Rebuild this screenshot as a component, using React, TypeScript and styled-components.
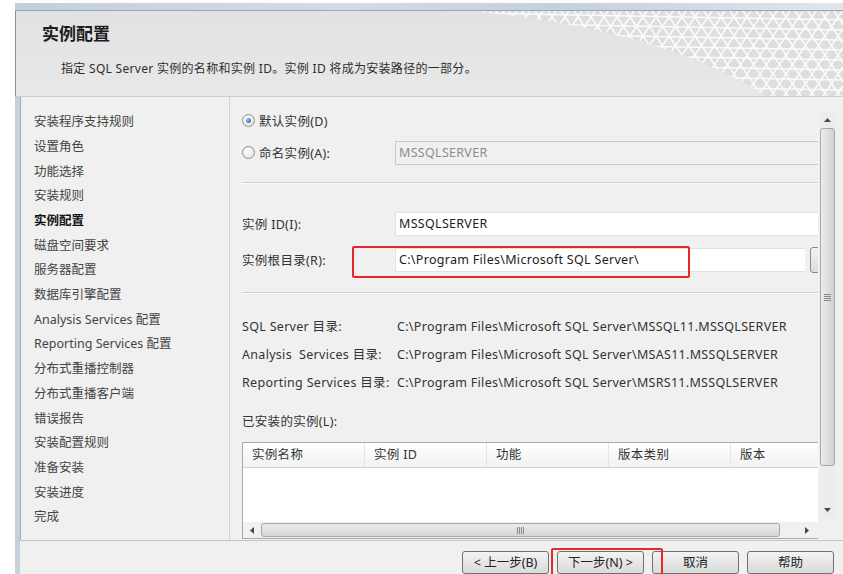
import React from "react";
import styled, { createGlobalStyle } from "styled-components";

const GlobalStyle = createGlobalStyle`
  html, body {
    margin: 0;
    background: #ffffff;
  }
  body {
    font-family: "Noto Sans", "Noto Sans CJK SC", sans-serif;
    font-size: 12.5px;
    letter-spacing: 0.3px;
    color: #333;
  }
`;

const navItems = [
  "安装程序支持规则",
  "设置角色",
  "功能选择",
  "安装规则",
  "实例配置",
  "磁盘空间要求",
  "服务器配置",
  "数据库引擎配置",
  "Analysis Services 配置",
  "Reporting Services 配置",
  "分布式重播控制器",
  "分布式重播客户端",
  "错误报告",
  "安装配置规则",
  "准备安装",
  "安装进度",
  "完成",
];

const dirs = [
  ["SQL Server 目录:", "C:\\Program Files\\Microsoft SQL Server\\MSSQL11.MSSQLSERVER"],
  ["Analysis  Services 目录:", "C:\\Program Files\\Microsoft SQL Server\\MSAS11.MSSQLSERVER"],
  ["Reporting Services 目录:", "C:\\Program Files\\Microsoft SQL Server\\MSRS11.MSSQLSERVER"],
];

const columns = ["实例名称", "实例 ID", "功能", "版本类别", "版本"];

// white lattice fanning out in the top-right corner of the banner
const meshLines: { x1: number; y1: number; x2: number; y2: number }[] = [];
for (let i = -10; i < 34; i++) {
  const x = i * 13;
  meshLines.push({ x1: x, y1: 0, x2: x + 60, y2: 88 });
  meshLines.push({ x1: x + 60, y1: 0, x2: x, y2: 88 });
}
for (let j = 0; j < 9; j++) {
  meshLines.push({ x1: 0, y1: j * 10 + 2, x2: 373, y2: j * 10 + 9 });
}

const MESH = "M0 0 Q 200 20 300 88 L 373 88 L 373 0 Z";

const HeaderArt = () => (
  <ArtBox>
    <svg width="373" height="88" viewBox="0 0 373 88">
      <defs>
        <clipPath id="bannerMeshClip">
          <path d={MESH} />
        </clipPath>
      </defs>
      <path d={MESH} fill="#dedede" />
      <g clipPath="url(#bannerMeshClip)">
        {meshLines.map((l, i) => (
          <line key={i} x1={l.x1} y1={l.y1} x2={l.x2} y2={l.y2} stroke="#fbfbfb" strokeWidth="1.6" />
        ))}
      </g>
    </svg>
  </ArtBox>
);

const Arrow = ({ dir }: { dir: "up" | "down" | "left" | "right" }) => {
  const pts = {
    up: "0,4 3.5,0 7,4",
    down: "0,0 3.5,4 7,0",
    left: "4,0 0,3.5 4,7",
    right: "0,0 4,3.5 0,7",
  }[dir];
  const vertical = dir === "up" || dir === "down";
  return (
    <svg width={vertical ? 7 : 4} height={vertical ? 4 : 7}>
      <polygon points={pts} fill="#4a4a4a" />
    </svg>
  );
};

export default function App() {
  return (
    <>
      <GlobalStyle />
      <Window>
        <TopFrame />
        <Header>
          <HeaderArt />
          <Title>实例配置</Title>
          <Subtitle>指定 SQL Server 实例的名称和实例 ID。实例 ID 将成为安装路径的一部分。</Subtitle>
        </Header>
        <Body>
          <Nav>
            {navItems.map((item) => (
              <NavItem key={item} $active={item === "实例配置"}>
                {item}
              </NavItem>
            ))}
          </Nav>
          <Content>
            <Column>
              <RadioRow>
                <Radio $checked />
                <span>默认实例(D)</span>
              </RadioRow>
              <FieldRow $top={12}>
                <RadioLabel>
                  <Radio />
                  <span>命名实例(A):</span>
                </RadioLabel>
                <TextBox $disabled>MSSQLSERVER</TextBox>
              </FieldRow>
              <Separator $top={17} />
              <FieldRow $top={27}>
                <Label>实例 ID(I):</Label>
                <TextBox>MSSQLSERVER</TextBox>
              </FieldRow>
              <FieldRow $top={11}>
                <Label>实例根目录(R):</Label>
                <TextBox>C:\Program Files\Microsoft SQL Server\</TextBox>
                <BrowseButton />
              </FieldRow>
              <Separator $top={20} />
              <DirList>
                {dirs.map(([label, value]) => (
                  <DirRow key={label}>
                    <DirLabel>{label}</DirLabel>
                    <span>{value}</span>
                  </DirRow>
                ))}
              </DirList>
              <InstalledLabel>已安装的实例(L):</InstalledLabel>
              <Table>
                <TableHead>
                  {columns.map((c) => (
                    <HeadCell key={c}>{c}</HeadCell>
                  ))}
                </TableHead>
                <TableBody />
                <HScroll>
                  <ScrollButton $w={18}>
                    <Arrow dir="left" />
                  </ScrollButton>
                  <HThumb>
                    <Grip $vertical={false} />
                  </HThumb>
                  <ScrollButton $w={22}>
                    <Arrow dir="right" />
                  </ScrollButton>
                </HScroll>
              </Table>
            </Column>
            <VScroll>
              <ScrollButton $h={16}>
                <Arrow dir="up" />
              </ScrollButton>
              <VThumb>
                <Grip $vertical />
              </VThumb>
              <VTrack />
              <ScrollButton $h={16}>
                <Arrow dir="down" />
              </ScrollButton>
            </VScroll>
          </Content>
        </Body>
        <Footer>
          <Button>&lt; 上一步(B)</Button>
          <Button>下一步(N) &gt;</Button>
          <Button>取消</Button>
          <Button>帮助</Button>
        </Footer>
        <Marker $left={337} $top={243} $width={338} $height={32} />
        <Marker $left={536} $top={545} $width={112} $height={40} />
      </Window>
    </>
  );
}

const Window = styled.div`
  position: relative;
  margin: 3px 0 0 15px;
  width: 828px;
  height: 571px;
  overflow: hidden;
  display: flex;
  flex-direction: column;
  background: #f0f0f0;
`;

const TopFrame = styled.div`
  height: 7px;
  background: linear-gradient(
    to right,
    #c3cfdc 0%,
    #d3dce6 40%,
    #c4d0dd 65%,
    #dfe6ee 100%
  );
  border-bottom: 1px solid #9aa6b3;
`;

const Header = styled.div`
  position: relative;
  height: 88px;
  box-sizing: border-box;
  border-left: 1px solid #8b949e;
  border-bottom: 1px solid #cfcfcf;
  background: linear-gradient(to bottom, #e2e2e2, #e8e8e8);
  overflow: hidden;
`;

const ArtBox = styled.div`
  position: absolute;
  top: 0;
  right: 0;
  width: 373px;
  height: 88px;
  line-height: 0;
`;

const Title = styled.div`
  position: relative;
  margin: 12px 0 0 26px;
  font-size: 17px;
  font-weight: 700;
  line-height: 22px;
  letter-spacing: 0;
  color: #1c1c1c;
`;

const Subtitle = styled.div`
  position: relative;
  margin: 16px 0 0 45px;
  font-size: 12px;
  line-height: 16px;
  color: #2e2e2e;
`;

const Body = styled.div`
  display: flex;
  height: 451px;
  border-left: 5px solid #c8d1db;
`;

const Nav = styled.div`
  width: 210px;
  box-sizing: border-box;
  padding: 13px 0 0 13px;
  border-left: 1px solid #a3abb4;
  border-right: 1px solid #d2d2d2;
  background: #f0f0f0;
`;

const NavItem = styled.div<{ $active?: boolean }>`
  height: 24.7px;
  line-height: 24.7px;
  white-space: nowrap;
  letter-spacing: 0;
  color: ${(p) => (p.$active ? "#111" : "#444")};
  font-weight: ${(p) => (p.$active ? 700 : 400)};
`;

const Content = styled.div`
  flex: 1;
  display: flex;
  align-items: flex-start;
  padding-left: 12px;
  background: #f0f0f0;
`;

const Column = styled.div`
  width: 576px;
  padding-top: 15px;
  overflow: hidden;
`;

const RadioRow = styled.div`
  display: flex;
  align-items: center;
  gap: 4px;
  height: 16px;
`;

const RadioLabel = styled.div`
  display: flex;
  align-items: center;
  gap: 4px;
  width: 153px;
  flex-shrink: 0;
`;

const Radio = styled.span<{ $checked?: boolean }>`
  position: relative;
  width: 11px;
  height: 11px;
  border-radius: 50%;
  border: 1px solid #8e8f8f;
  background: radial-gradient(circle at 40% 35%, #ffffff, #dcdcdc);
  flex-shrink: 0;
  &::after {
    content: "";
    display: ${(p) => (p.$checked ? "block" : "none")};
    position: absolute;
    left: 3px;
    top: 3px;
    width: 5px;
    height: 5px;
    border-radius: 50%;
    background: radial-gradient(circle at 35% 35%, #8fc0f0, #1d5aa8);
  }
`;

const FieldRow = styled.div<{ $top: number }>`
  display: flex;
  align-items: center;
  margin-top: ${(p) => p.$top}px;
  height: 25px;
`;

const Label = styled.span`
  width: 153px;
  flex-shrink: 0;
`;

const TextBox = styled.div<{ $disabled?: boolean }>`
  flex: 1;
  min-width: 0;
  height: 24px;
  box-sizing: border-box;
  padding-left: 3px;
  line-height: 22px;
  border: 1px solid ${(p) => (p.$disabled ? "#c9c9c9" : "#e2e2e2")};
  border-right: none;
  background: ${(p) => (p.$disabled ? "#f0f0f0" : "#ffffff")};
  color: ${(p) => (p.$disabled ? "#8d8d8d" : "#222")};
  white-space: nowrap;
`;

const BrowseButton = styled.div`
  flex-shrink: 0;
  margin: 0 -16px 0 5px;
  width: 24px;
  height: 26px;
  box-sizing: border-box;
  border: 1px solid #8a8a8a;
  border-radius: 3px;
  background: linear-gradient(to bottom, #f4f4f4, #dcdcdc);
`;

const Separator = styled.div<{ $top: number }>`
  margin-top: ${(p) => p.$top}px;
  height: 1px;
  background: #d0d0d0;
  border-bottom: 1px solid #fafafa;
`;

const DirList = styled.div`
  margin-top: 19px;
`;

const DirRow = styled.div`
  display: flex;
  height: 28px;
  line-height: 28px;
  white-space: nowrap;
`;

const DirLabel = styled.span`
  width: 155px;
  flex-shrink: 0;
  white-space: pre;
`;

const InstalledLabel = styled.div`
  margin-top: 11px;
  height: 28px;
  line-height: 28px;
`;

const Table = styled.div`
  margin-top: 6px;
  border: 1px solid #a9a9a9;
  border-right: none;
  background: #ffffff;
`;

const TableHead = styled.div`
  display: flex;
  height: 24px;
  border-bottom: 1px solid #d5d5d5;
  background: linear-gradient(to bottom, #ffffff, #f1f2f4);
`;

const HeadCell = styled.div`
  width: 122px;
  flex-shrink: 0;
  box-sizing: border-box;
  padding-left: 9px;
  line-height: 24px;
  border-right: 1px solid #e3e5e8;
  color: #333;
  &:last-child {
    flex: 1;
    border-right: none;
  }
`;

const TableBody = styled.div`
  height: 54px;
  background: #ffffff;
`;

const HScroll = styled.div`
  display: flex;
  align-items: center;
  height: 16px;
  background: #f0f0f0;
`;

const ScrollButton = styled.div<{ $w?: number; $h?: number }>`
  display: flex;
  align-items: center;
  justify-content: center;
  width: ${(p) => (p.$w ? `${p.$w}px` : "100%")};
  height: ${(p) => (p.$h ? `${p.$h}px` : "100%")};
  flex-shrink: 0;
`;

const HThumb = styled.div`
  flex: 1;
  height: 14px;
  margin-right: 16px;
  display: flex;
  align-items: center;
  justify-content: center;
  box-sizing: border-box;
  border: 1px solid #a8a8a8;
  border-radius: 3px;
  background: linear-gradient(to bottom, #ececec, #d6d6d6);
`;

const Grip = styled.span<{ $vertical: boolean }>`
  width: 7px;
  height: 7px;
  background: ${(p) =>
    p.$vertical
      ? "repeating-linear-gradient(to bottom, #8a8a8a 0 1px, transparent 1px 2px)"
      : "repeating-linear-gradient(to right, #8a8a8a 0 1px, transparent 1px 2px)"};
`;

const VScroll = styled.div`
  margin: 15px 0 0 2px;
  width: 15px;
  height: 406px;
  display: flex;
  flex-direction: column;
  background: #ececec;
`;

const VThumb = styled.div`
  height: 338px;
  display: flex;
  align-items: center;
  justify-content: center;
  box-sizing: border-box;
  border: 1px solid #a8a8a8;
  border-radius: 3px;
  background: linear-gradient(to right, #ececec, #d2d2d2);
`;

const VTrack = styled.div`
  flex: 1;
`;

const Footer = styled.div`
  flex: 1;
  display: flex;
  justify-content: flex-end;
  gap: 8px;
  padding: 10px 9px 0 0;
  border-top: 1px solid #c5c5c5;
  border-left: 5px solid #c8d1db;
`;

const Button = styled.div`
  width: 87px;
  height: 23px;
  box-sizing: border-box;
  border: 1px solid #707070;
  border-radius: 3px;
  background: linear-gradient(to bottom, #f3f3f3, #e6e6e6 50%, #dadada);
  text-align: center;
  line-height: 21px;
  letter-spacing: 0;
  color: #222;
`;

const Marker = styled.div<{ $left: number; $top: number; $width: number; $height: number }>`
  position: absolute;
  left: ${(p) => p.$left}px;
  top: ${(p) => p.$top}px;
  width: ${(p) => p.$width}px;
  height: ${(p) => p.$height}px;
  box-sizing: border-box;
  border: 2px solid #e8262c;
  border-radius: 2px;
  pointer-events: none;
`;
